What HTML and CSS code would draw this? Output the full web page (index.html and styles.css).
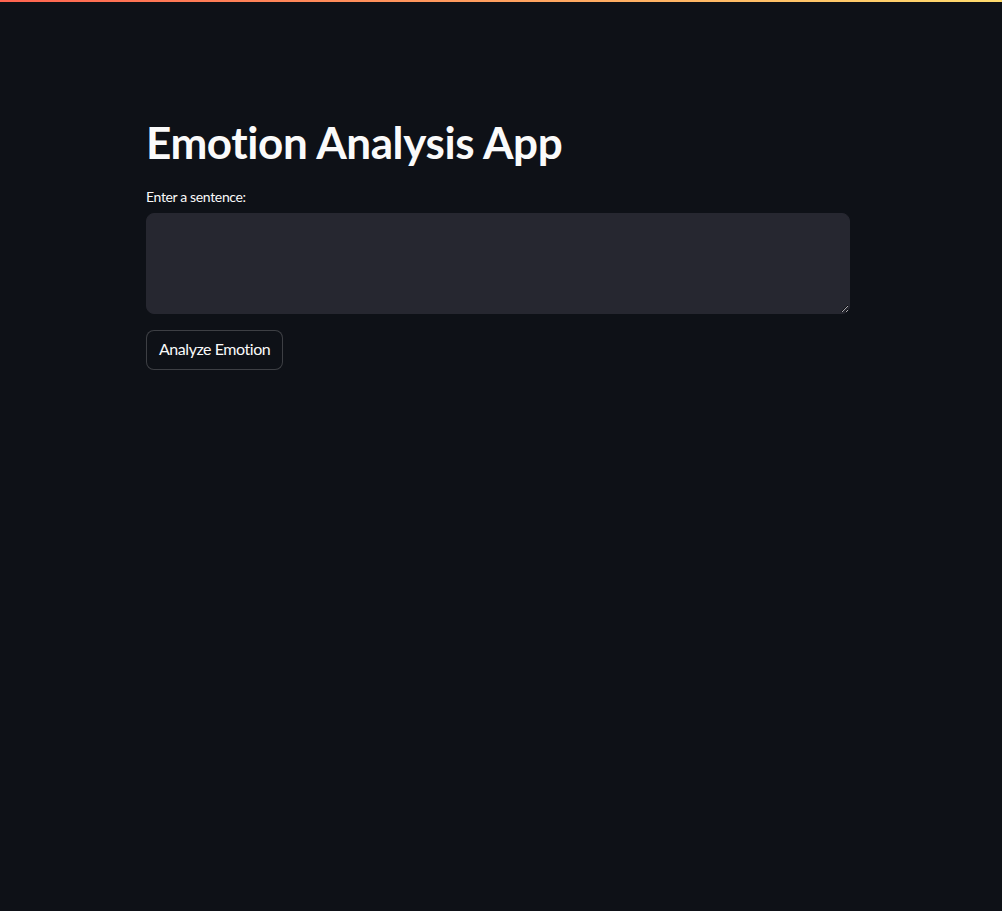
FILE: index.html
```html
<!DOCTYPE html>
<html lang="en">
<head>
<meta charset="utf-8">
<title>Emotion Analysis App</title>
<link rel="stylesheet" href="styles.css">
</head>
<body>
<div class="decoration"></div>
<main class="main">
  <div class="block">
    <h1 class="title">Emotion Analysis App</h1>
    <label class="label" for="sentence">Enter a sentence:</label>
    <textarea id="sentence" class="textarea"></textarea>
    <button class="button" type="button">Analyze Emotion</button>
  </div>
</main>
</body>
</html>
```
FILE: styles.css
```css
* { box-sizing: border-box; }
html, body {
  margin: 0;
  padding: 0;
  height: 100%;
  background: #0e1117;
  color: #fafafa;
  font-family: Lato, "Source Sans Pro", "Noto Sans", sans-serif;
  font-variant-ligatures: none;
}
.decoration {
  height: 2px;
  background: linear-gradient(90deg, rgb(255, 100, 80), rgb(255, 220, 110));
}
.main {
  padding: 0 0 0 146px;
}
.block {
  width: 704px;
  padding-top: 94px;
  display: flex;
  flex-direction: column;
  align-items: flex-start;
}
.title {
  margin: 0;
  padding: 20px 0 18px;
  font-size: 44px;
  line-height: 1.2;
  font-weight: 700;
  letter-spacing: -0.4px;
  color: #fafafa;
}
.label {
  font-size: 14px;
  line-height: 1.4;
  margin-bottom: 7px;
  letter-spacing: -0.35px;
  color: #fafafa;
}
.textarea {
  width: 100%;
  height: 101px;
  background: #262730;
  border: 1px solid #262730;
  border-radius: 8px;
  color: #fafafa;
  font-family: inherit;
  font-size: 16px;
  padding: 16px;
  outline: none;
  resize: vertical;
  margin: 0 0 16px;
  display: block;
}
.button {
  height: 40px;
  padding: 0 12px 3px;
  background: #0e1117;
  color: #fafafa;
  border: 1px solid rgba(250, 250, 250, 0.2);
  border-radius: 8px;
  font-family: inherit;
  font-size: 16px;
  letter-spacing: -0.45px;
  line-height: 1.6;
}
```
